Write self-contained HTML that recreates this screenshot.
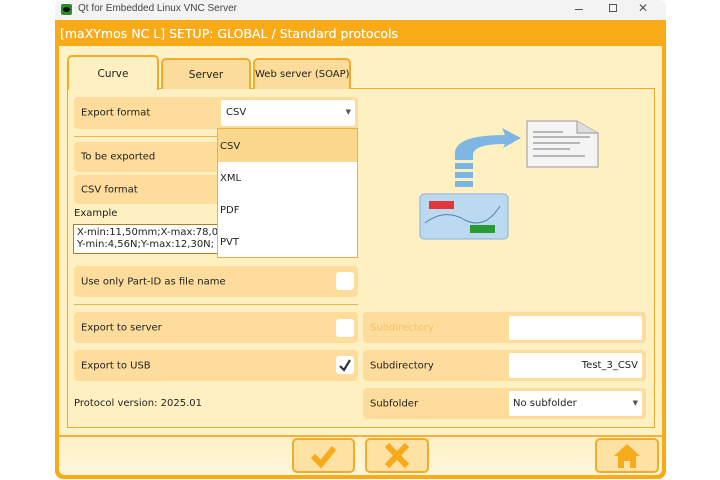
<!DOCTYPE html>
<html><head><meta charset="utf-8"><style>
*{box-sizing:border-box;margin:0;padding:0}
body{width:720px;height:480px;background:#fff;position:relative;overflow:hidden;font-family:"DejaVu Sans","Liberation Sans",sans-serif;font-size:10px;color:#222}
.a{position:absolute}
.row{position:absolute;background:#fddc9c;border-radius:4px;}
.lbl{position:absolute;left:7px;top:50%;transform:translateY(-50%);white-space:nowrap}
.cb{position:absolute;background:#fff;border-radius:3px;width:18px;height:18px}
.inp{position:absolute;background:#fff;border-radius:2px}
.tab{position:absolute;border:2px solid #f2ab2a;border-bottom:none;border-radius:5px 5px 0 0;background:#fcdc9a;text-align:center;font-size:10.5px;white-space:nowrap;overflow:visible}
.btn{position:absolute;border:2px solid #f2ab2a;border-radius:5px;background:#fde2a4}
</style></head><body>
<div class="a" style="left:55px;top:0;width:611px;height:20px;background:#f3f3f3;border-radius:6px 6px 0 0"></div>
<div class="a" style="left:61px;top:4px;width:11px;height:11px;background:#2c8a2c;border-radius:2px"><div class="a" style="left:2px;top:3px;width:7px;height:5px;background:#111;border-radius:50%"></div></div>
<div class="a" style="left:78px;top:3px;font-family:'Liberation Sans',sans-serif;font-size:10px;color:#444">Qt for Embedded Linux VNC Server</div>
<div class="a" style="left:575px;top:9px;width:8px;height:1px;background:#555"></div>
<div class="a" style="left:609px;top:4px;width:8px;height:8px;border:1px solid #555"></div>
<div class="a" style="left:638px;top:1px;font-size:12px;color:#555;font-family:'Liberation Sans'">✕</div>
<div class="a" style="left:55px;top:20px;width:611px;height:459px;background:#f8aa17;border-radius:0 0 8px 8px"></div>
<div class="a" style="left:60px;top:26px;font-size:12.5px;color:#fff;white-space:nowrap;text-shadow:0 0 0.4px #fff">[maXYmos NC L] SETUP: GLOBAL / Standard protocols</div>
<div class="a" style="left:59px;top:46px;width:603px;height:429px;background:#fff2c6;border-radius:0 0 6px 6px"></div>
<div class="a" style="left:67px;top:88px;width:588px;height:340px;border:1.5px solid #f0a92a;background:#fff0c2"></div>
<div class="a" style="left:59px;top:435px;width:603px;height:2px;background:#f4b03a"></div>
<div class="a" style="left:59px;top:437px;width:603px;height:38px;background:linear-gradient(#fff0c6,#fff6da);border-radius:0 0 6px 6px"></div>
<div class="tab" style="left:67px;top:55px;width:92px;height:35px;background:#fff0c2;line-height:34px">Curve</div>
<div class="tab" style="left:161px;top:58px;width:90px;height:31px;line-height:30px">Server</div>
<div class="tab" style="left:253px;top:58px;width:98px;height:31px;line-height:30px;font-size:10px">Web server (SOAP)</div>
<div class="row" style="left:74px;top:97px;width:284px;height:32px"><span class="lbl">Export format</span></div>
<div class="inp" style="left:221px;top:100px;width:134px;height:26px"><span class="a" style="left:5px;top:7px">CSV</span><span class="a" style="right:4px;top:8px;font-size:7px;color:#555">▼</span></div>
<div class="a" style="left:74px;top:136px;width:145px;height:1px;background:#f2b450"></div>
<div class="row" style="left:74px;top:142px;width:150px;height:30px"><span class="lbl">To be exported</span></div>
<div class="row" style="left:74px;top:175px;width:150px;height:29px"><span class="lbl">CSV format</span></div>
<div class="a" style="left:74px;top:208px">Example</div>
<div class="a" style="left:73px;top:224px;width:150px;height:30px;background:#fff;border:1px solid #b08020;border-right:none;overflow:hidden;white-space:nowrap;padding:2px 0 0 3px;line-height:12px">X-min:11,50mm;X-max:78,09<br>Y-min:4,56N;Y-max:12,30N;</div>
<div class="a" style="left:217px;top:128px;width:141px;height:130px;background:#fff;border:1px solid #f0b040">
 <div style="height:33px;background:#fcd88e;padding:12px 0 0 2px">CSV</div>
 <div style="height:32px;padding:11px 0 0 2px">XML</div>
 <div style="height:32px;padding:11px 0 0 2px">PDF</div>
 <div style="height:32px;padding:11px 0 0 2px">PVT</div>
</div>
<div class="row" style="left:74px;top:266px;width:284px;height:31px"><span class="lbl">Use only Part-ID as file name</span></div>
<div class="cb" style="left:336px;top:272px"></div>
<div class="a" style="left:74px;top:304px;width:284px;height:1px;background:#f2b450"></div>
<div class="row" style="left:74px;top:312px;width:284px;height:31px"><span class="lbl">Export to server</span></div>
<div class="cb" style="left:336px;top:319px"></div>
<div class="row" style="left:74px;top:350px;width:284px;height:31px"><span class="lbl">Export to USB</span></div>
<div class="cb" style="left:336px;top:356px"><svg width="18" height="18"><path d="M4 10 L8 14 L14 4" stroke="#333" stroke-width="2.2" fill="none"/></svg></div>
<div class="a" style="left:74px;top:398px">Protocol version: 2025.01</div>
<div class="row" style="left:363px;top:312px;width:283px;height:31px"><span class="lbl" style="color:#f3c45a">Subdirectory</span></div>
<div class="inp" style="left:509px;top:316px;width:133px;height:24px"></div>
<div class="row" style="left:363px;top:350px;width:283px;height:31px"><span class="lbl">Subdirectory</span></div>
<div class="inp" style="left:509px;top:353px;width:133px;height:25px"><span class="a" style="right:4px;top:7px">Test_3_CSV</span></div>
<div class="row" style="left:363px;top:388px;width:283px;height:31px"><span class="lbl">Subfolder</span></div>
<div class="inp" style="left:509px;top:391px;width:133px;height:25px"><span class="a" style="left:4px;top:7px">No subfolder</span><span class="a" style="right:4px;top:8px;font-size:7px;color:#555">▼</span></div>
<svg class="a" style="left:415px;top:118px" width="190" height="125">
 <path d="M112 3 H162 L183 15 V49 H112 Z" fill="#f4f4f4" stroke="#999"/>
 <path d="M162 3 V15 H183" fill="#ddd" stroke="#999"/>
 <path d="M118 14H148 M118 19H175 M118 25H165 M118 31H155 M118 38H170" stroke="#777" stroke-width="1"/>
 <path d="M40 42 V34 Q42 17 90 17 L87 10 L106 20 L88 30 L90 26 Q60 26 58 36 V42 Z" fill="#7eb6e3"/>
 <rect x="40" y="45" width="18" height="6" fill="#7eb6e3"/><rect x="40" y="54" width="18" height="6" fill="#7eb6e3"/><rect x="40" y="63" width="18" height="6" fill="#7eb6e3"/>
 <rect x="5" y="76" width="88" height="45" rx="4" fill="#bcd9f2" stroke="#8ab0d4"/>
 <rect x="14" y="83" width="25" height="8" fill="#e03838"/>
 <rect x="55" y="107" width="25" height="8" fill="#2a9a35"/>
 <path d="M10 105 Q30 90 50 102 Q70 112 85 88" stroke="#5a7fa8" fill="none"/>
</svg>
<div class="btn" style="left:292px;top:438px;width:63px;height:35px"><svg width="59" height="31"><path d="M19 16 L27 24 L40 8" stroke="#f6ab1c" stroke-width="6" fill="none"/></svg></div>
<div class="btn" style="left:365px;top:438px;width:64px;height:35px"><svg width="60" height="31"><path d="M20 5 L40 26 M40 5 L20 26" stroke="#f6ab1c" stroke-width="6" fill="none"/></svg></div>
<div class="btn" style="left:595px;top:438px;width:64px;height:35px"><svg width="60" height="31"><path d="M30 4 L17 16 H21 V28 H27 V21 H33 V28 H39 V16 H43 Z" fill="#f6ab1c"/></svg></div>
</body></html>
